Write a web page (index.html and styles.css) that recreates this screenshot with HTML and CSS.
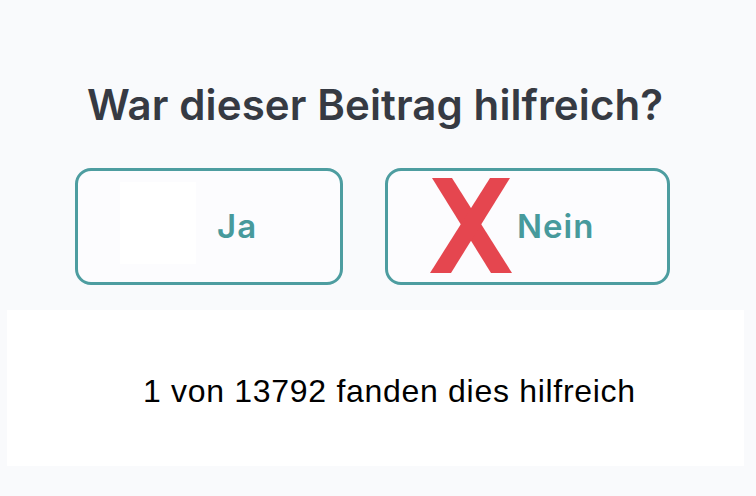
FILE: index.html
```html
<!DOCTYPE html>
<html lang="de">
<head>
<meta charset="utf-8">
<title>Feedback</title>
<link rel="stylesheet" href="styles.css">
</head>
<body>
<main class="page">
  <h1 class="title">War dieser Beitrag hilfreich?</h1>
  <div class="actions">
    <button class="vote vote-yes" type="button">
      <span class="thumb"></span>
      <span class="label">Ja</span>
    </button>
    <button class="vote vote-no" type="button">
      <svg class="cross" viewBox="0 0 82 95" aria-hidden="true">
        <polygon points="2,0 22,0 82,95 61,95" fill="#e5464f"/>
        <polygon points="60,0 80,0 21,95 0,95" fill="#e5464f"/>
      </svg>
      <span class="label">Nein</span>
    </button>
  </div>
  <section class="stats">
    <p class="stats-text">1 von 13792 fanden dies hilfreich</p>
  </section>
</main>
</body>
</html>
```

FILE: styles.css
```css
html, body {
  margin: 0;
  padding: 0;
  background: #f9fafc;
}

.page {
  width: 756px;
  height: 496px;
  display: flex;
  flex-direction: column;
  align-items: flex-start;
}

.title {
  margin: 77px 0 0 87px;
  font-family: Inter, "Noto Sans", sans-serif;
  font-weight: 600;
  font-size: 42px;
  line-height: 56px;
  letter-spacing: 0.1px;
  color: #363a43;
  white-space: nowrap;
}

.actions {
  display: flex;
  gap: 42px;
  margin: 35px 0 0 75px;
}

.vote {
  box-sizing: border-box;
  height: 117px;
  border: 3px solid #4d9da0;
  border-radius: 16px;
  background: #fcfcfe;
  display: flex;
  align-items: center;
  padding: 0 0 0 42px;
  font-family: Inter, "Noto Sans", sans-serif;
  font-weight: 600;
  font-size: 33px;
  letter-spacing: 1px;
  color: #479a9c;
  cursor: pointer;
}

.vote-yes {
  width: 268px;
  gap: 21px;
}

.vote-no {
  width: 285px;
  gap: 5px;
}

.thumb {
  display: block;
  width: 76px;
  height: 82px;
  background: #ffffff;
  margin-top: -8px;
}

.cross {
  display: block;
  width: 82px;
  height: 95px;
  margin-top: -3px;
}

.label {
  display: block;
  line-height: 1;
}

.stats {
  box-sizing: border-box;
  width: 737px;
  height: 156px;
  margin: 25px 0 0 7px;
  background: #ffffff;
  display: flex;
  align-items: center;
  padding-left: 136px;
}

.stats-text {
  margin: 6px 0 0 0;
  font-family: "Liberation Sans", Arial, sans-serif;
  font-size: 32px;
  letter-spacing: 0.7px;
  color: #000000;
  white-space: nowrap;
}
```
